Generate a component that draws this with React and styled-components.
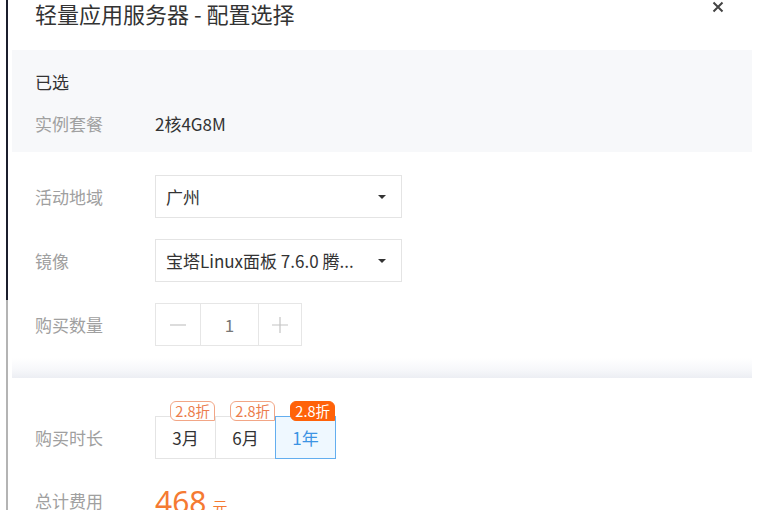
import React, { useState } from 'react'
import styled, { createGlobalStyle } from 'styled-components'

const GlobalStyle = createGlobalStyle`
  html, body {
    margin: 0;
    padding: 0;
    background: #fff;
    overflow: hidden;
  }
  body {
    font-family: "Noto Sans CJK SC", "Noto Sans", sans-serif;
    color: #333;
  }
`

const Page = styled.div`
  display: flex;
  width: 768px;
  height: 510px;
  overflow: hidden;
`

const Rail = styled.div`
  flex: none;
  width: 2px;
  margin-left: 6px;
  background: linear-gradient(to bottom, #1b1e2c 0, #1b1e2c 300px, #b4b4b4 300px, #b4b4b4 100%);
`

const Dialog = styled.div`
  flex: none;
  width: 740px;
  margin-left: 4px;
`

const Header = styled.div`
  display: flex;
  justify-content: space-between;
  align-items: flex-start;
  height: 50px;
  padding-left: 23px;
`

const Title = styled.h2`
  margin: 1px 0 0;
  font-size: 22px;
  font-weight: 400;
  line-height: 24px;
  color: #333;
`

const Close = styled.button`
  border: 0;
  background: none;
  padding: 0;
  margin: 1px 28px 0 0;
  width: 12px;
  height: 12px;
  cursor: pointer;
  display: flex;
`

const Selected = styled.div`
  background: #f7f8fa;
  padding: 20px 23px 17px;
`

const SectionTitle = styled.div`
  font-size: 17px;
  line-height: 24px;
  color: #333;
`

const Form = styled.div`
  display: flex;
  flex-direction: column;
  gap: ${p => p.gap ?? 21}px;
  padding: ${p => p.pad || '23px 23px 0'};
`

const Row = styled.div`
  display: flex;
  align-items: center;
  height: ${p => p.h || 43}px;
  margin-top: ${p => p.mt || 0}px;
`

const Label = styled.div`
  flex: none;
  width: 120px;
  font-size: 17px;
  color: #a0a0a0;
`

const Value = styled.div`
  font-size: 17px;
  color: #333;
`

const Select = styled.div`
  box-sizing: border-box;
  display: flex;
  align-items: center;
  justify-content: space-between;
  width: 247px;
  height: 43px;
  padding: 0 15px 0 10px;
  border: 1px solid #e4e4e4;
  background: #fff;
  font-size: 17px;
  color: #333;
`

const Caret = styled.span`
  width: 0;
  height: 0;
  border-left: 4px solid transparent;
  border-right: 4px solid transparent;
  border-top: 4px solid #333;
`

const Stepper = styled.div`
  display: flex;
  height: 43px;
  border: 1px solid #e6e6e6;
  box-sizing: border-box;
`

const StepBtn = styled.div`
  display: flex;
  align-items: center;
  justify-content: center;
  width: ${p => p.w}px;
  border-left: ${p => (p.first ? 0 : '1px solid #e6e6e6')};
  font-size: 17px;
  color: #777;
`

const Divider = styled.div`
  height: 20px;
  margin-top: 12px;
  background: linear-gradient(to bottom, #fff 0, #f6f7fa 60%, #eceef3 100%);
`

const Tabs = styled.div`
  display: flex;
`

const Tab = styled.div`
  position: relative;
  box-sizing: border-box;
  display: flex;
  align-items: center;
  justify-content: center;
  width: 61px;
  height: 43px;
  margin-left: ${p => (p.first ? 0 : -1)}px;
  border: 1px solid ${p => (p.active ? '#63aeef' : '#e4e4e4')};
  background: ${p => (p.active ? '#eff8ff' : '#fff')};
  color: ${p => (p.active ? '#3c94e4' : '#333')};
  font-size: 17px;
  z-index: ${p => (p.active ? 1 : 0)};
  cursor: pointer;
`

const Badge = styled.span`
  position: absolute;
  top: -16px;
  right: 0;
  box-sizing: border-box;
  height: 20px;
  padding: 0 4px;
  border: 1px solid ${p => (p.active ? '#ff6209' : '#f2a686')};
  border-radius: 6px 6px 0 6px;
  background: ${p => (p.active ? '#ff6209' : '#fff')};
  color: ${p => (p.active ? '#fff' : '#ec7d4d')};
  font-size: 14.5px;
  line-height: 18px;
  white-space: nowrap;
`

const Price = styled.div`
  display: flex;
  align-items: baseline;
  color: #f57a32;
  font-family: "Noto Sans", "Noto Sans CJK SC", sans-serif;
  font-size: 30px;
  line-height: 30px;
  margin-top: 8px;
`

const Unit = styled.span`
  margin-left: 6px;
  font-family: "Noto Sans CJK SC", sans-serif;
  font-size: 15px;
`

const durations = ['3月', '6月', '1年']

export default function App() {
  const [duration, setDuration] = useState('1年')
  const [count] = useState(1)

  return (
    <Page>
      <GlobalStyle />
      <Rail />
      <Dialog>
        <Header>
          <Title>轻量应用服务器 - 配置选择</Title>
          <Close aria-label='关闭'>
            <svg width='12' height='12' viewBox='0 0 12 12'>
              <path d='M1.5 1.5 L10.5 10.5 M10.5 1.5 L1.5 10.5' stroke='#444' strokeWidth='2' />
            </svg>
          </Close>
        </Header>

        <Selected>
          <SectionTitle>已选</SectionTitle>
          <Row h={24} mt={17}>
            <Label>实例套餐</Label>
            <Value>2核4G8M</Value>
          </Row>
        </Selected>

        <Form>
          <Row>
            <Label>活动地域</Label>
            <Select>
              <span>广州</span>
              <Caret />
            </Select>
          </Row>
          <Row>
            <Label>镜像</Label>
            <Select>
              <span>宝塔Linux面板 7.6.0 腾...</span>
              <Caret />
            </Select>
          </Row>
          <Row>
            <Label>购买数量</Label>
            <Stepper>
              <StepBtn first w={44}>
                <svg width='16' height='2' viewBox='0 0 16 2'>
                  <path d='M0 1 H16' stroke='#c4c4c4' strokeWidth='1.2' />
                </svg>
              </StepBtn>
              <StepBtn w={57}>{count}</StepBtn>
              <StepBtn w={42}>
                <svg width='16' height='16' viewBox='0 0 16 16'>
                  <path d='M0 8 H16 M8 0 V16' stroke='#c4c4c4' strokeWidth='1.2' />
                </svg>
              </StepBtn>
            </Stepper>
          </Row>
        </Form>

        <Divider />

        <Form pad='38px 23px 0' gap={0}>
          <Row>
            <Label>购买时长</Label>
            <Tabs>
              {durations.map((d, i) => (
                <Tab
                  key={d}
                  first={i === 0}
                  active={d === duration}
                  onClick={() => setDuration(d)}
                >
                  <Badge active={d === duration}>2.8折</Badge>
                  {d}
                </Tab>
              ))}
            </Tabs>
          </Row>
          <Row h={30} mt={26}>
            <Label>总计费用</Label>
            <Price>
              468<Unit>元</Unit>
            </Price>
          </Row>
        </Form>
      </Dialog>
    </Page>
  )
}
